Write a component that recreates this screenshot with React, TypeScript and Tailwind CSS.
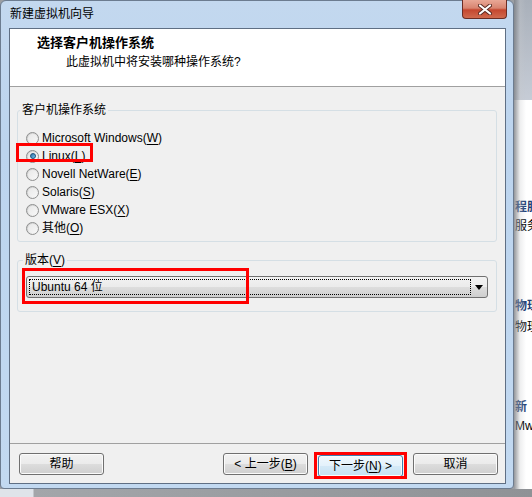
import React from 'react';

const font = "font-['Liberation_Sans','Noto_Sans_CJK_SC',sans-serif]";

const systems = [
  { label: 'Microsoft Windows', key: 'W', checked: false },
  { label: 'Linux', key: 'L', checked: true },
  { label: 'Novell NetWare', key: 'E', checked: false },
  { label: 'Solaris', key: 'S', checked: false },
  { label: 'VMware ESX', key: 'X', checked: false },
  { label: '其他', key: 'O', checked: false },
];

function Radio({ checked }: { checked: boolean }) {
  return (
    <span className="w-[13px] h-[13px] shrink-0 rounded-full border border-[#8e8f8f] bg-gradient-to-br from-[#c9c9c9] to-[#fdfdfd] flex items-center justify-center">
      <span className="w-[9px] h-[9px] rounded-full bg-gradient-to-br from-[#e8e8e8] to-[#f7f7f7] flex items-center justify-center">
        {checked && (
          <span className="w-[6px] h-[6px] rounded-full border border-[#1b4f7a] bg-gradient-to-br from-[#2a6fa3] to-[#7fc8f3]" />
        )}
      </span>
    </span>
  );
}

function Btn({ children, primary }: { children: React.ReactNode; primary?: boolean }) {
  return (
    <button
      className={`h-[22px] w-[85px] rounded-[3px] border text-[12px] text-black leading-none shadow-[inset_0_0_0_1px_#fbfbfb] ${
        primary
          ? 'border-[#3c7fb1] bg-[linear-gradient(#f0f8fd_0%,#e3f1fb_50%,#d4e9f7_51%,#c6e1f3_100%)]'
          : 'border-[#707070] bg-[linear-gradient(#f2f2f2_0%,#ebebeb_50%,#dddddd_51%,#cfcfcf_100%)]'
      }`}
    >
      {children}
    </button>
  );
}

function Key({ k }: { k: string }) {
  return (
    <>
      (<span className="underline underline-offset-2">{k}</span>)
    </>
  );
}

export default function App() {
  return (
    <div className={`w-[532px] h-[497px] overflow-hidden flex flex-col bg-[#9b9ea3] ${font}`}>
      <div className="flex h-[489px]">
        {/* window frame */}
        <div className="w-[514px] h-[489px] shrink-0 rounded-t-[6px] rounded-b-[4px] border border-[#6c7c90] bg-[linear-gradient(180deg,#c3d8ef_0%,#bcd4ee_30%,#c2d9f1_100%)] flex flex-col pl-[8px] pr-[7px] pb-[4px]">
          <div className="h-[27px] flex items-start justify-between">
            <span className="pl-[1px] pt-[5px] text-[12px] leading-[16px] text-black">新建虚拟机向导</span>
            <div className="w-[45px] h-[19px] -mt-[1px] mr-[-1px] rounded-b-[4px] border border-[#6b2d24] border-t-0 bg-[linear-gradient(#e9a896_0%,#d88470_45%,#c5472f_55%,#d06a4e_100%)] flex items-center justify-center">
              <svg width="14" height="11" viewBox="0 0 14 11">
                <path d="M2 1.5 L12 9.5 M12 1.5 L2 9.5" stroke="#5a2a22" strokeWidth="4" strokeLinecap="round" />
                <path d="M2 1.5 L12 9.5 M12 1.5 L2 9.5" stroke="#ffffff" strokeWidth="2.2" strokeLinecap="round" />
              </svg>
            </div>
          </div>

          {/* client area */}
          <div className="flex-1 border border-[#5f6f84] bg-[#f0f0f0] flex flex-col">
            <div className="h-[58px] bg-white border-b border-[#a0a0a0] pl-[27px] pt-[6px]">
              <p className="text-[13px] leading-[16px] font-bold text-black">选择客户机操作系统</p>
              <p className="mt-[3px] ml-[29px] text-[12px] leading-[16px] text-black">此虚拟机中将安装哪种操作系统?</p>
            </div>

            <div className="flex-1 border-b border-[#a0a0a0] pl-[7px] pr-[8px] pt-[15px]">
              <fieldset className="border border-[#d5dfe5] rounded-[3px] pl-[8px] pb-[4px]">
                <legend className="-ml-[6px] px-[2px] text-[12px] leading-[16px] text-black">客户机操作系统</legend>
                <div className="mt-[11px] flex flex-col">
                  {systems.map((s) => (
                    <div key={s.key} className="relative h-[18px] flex items-center gap-[3px] text-[12px] text-black">
                      <Radio checked={s.checked} />
                      <span>
                        {s.label}
                        <Key k={s.key} />
                      </span>
                      {s.checked && (
                        <span className="absolute -left-[10px] -top-[4px] w-[77px] h-[19px] border-[3px] border-[#ff0000]" />
                      )}
                    </div>
                  ))}
                </div>
              </fieldset>

              <fieldset className="mt-[10px] border border-[#d5dfe5] rounded-[3px] px-[8px] pb-[13px]">
                <legend className="-ml-[3px] px-[2px] text-[12px] leading-[16px] text-black">
                  版本<Key k="V" />
                </legend>
                <div className="relative mt-[8px] h-[22px] rounded-[3px] border border-[#707070] bg-[linear-gradient(#f2f2f2_0%,#ebebeb_50%,#dddddd_51%,#cfcfcf_100%)] flex items-center">
                  <div className="ml-[2px] w-[442px] h-[16px] border border-dotted border-black flex items-center pl-[2px] text-[12px] text-black">
                    Ubuntu 64 位
                  </div>
                  <div className="flex-1 flex items-center justify-center">
                    <svg width="8" height="5" viewBox="0 0 8 5">
                      <path d="M0 0 H8 L4 5 Z" fill="#000" />
                    </svg>
                  </div>
                  <span className="absolute -left-[5px] -top-[9px] w-[227px] h-[36px] border-[3px] border-[#ff0000]" />
                </div>
              </fieldset>
            </div>

            <div className="h-[39px] pt-[9px] pl-[9px] pr-[7px] flex items-start">
              <Btn>帮助</Btn>
              <div className="ml-auto flex gap-[10px]">
                <Btn>&lt; 上一步<Key k="B" /></Btn>
                <div className="relative">
                  <Btn primary>
                    下一步<Key k="N" /> &gt;
                  </Btn>
                  <span className="absolute -left-[4px] -right-[4px] -top-[1px] -bottom-[2px] border-[3px] border-[#ff0000]" />
                </div>
                <Btn>取消</Btn>
              </div>
            </div>
          </div>
        </div>

        {/* desktop strip behind the dialog */}
        <div className="relative flex-1 overflow-hidden bg-white flex flex-col">
          <div className="h-[100px] bg-[linear-gradient(180deg,#a9b0ba,#c6ccd6)]" />
          <div className="pl-[1px] pt-[98px] text-[12px] leading-[19px] whitespace-nowrap font-bold text-[#1f3e74]">程服</div>
          <div className="pl-[1px] text-[12px] leading-[19px] whitespace-nowrap text-black">服务</div>
          <div className="pl-[1px] pt-[61px] text-[12px] leading-[19px] whitespace-nowrap font-bold text-[#1f3e74]">物理</div>
          <div className="pl-[1px] pt-[2px] text-[12px] leading-[19px] whitespace-nowrap text-black">物理</div>
          <div className="pl-[1px] pt-[61px] text-[12px] leading-[19px] whitespace-nowrap font-bold text-[#1f3e74]">新</div>
          <div className="pl-[1px] text-[12px] leading-[19px] whitespace-nowrap text-black">Mwa</div>
          <span className="absolute inset-y-0 left-0 w-[12px] bg-gradient-to-r from-[#7a7d82]/80 via-[#c5c7ca]/30 to-transparent" />
        </div>
      </div>
      <div className="flex-1 bg-[linear-gradient(90deg,#dfe4ea_0px,#dfe4ea_33px,#a3a6aa_34px,#8f9296_100%)]" />
    </div>
  );
}
